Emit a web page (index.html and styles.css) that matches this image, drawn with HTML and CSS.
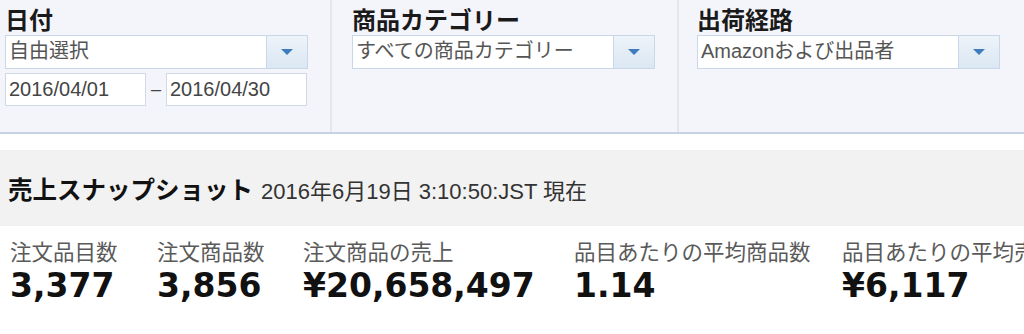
FILE: index.html
```html
<!DOCTYPE html>
<html lang="ja">
<head>
    <meta charset="UTF-8">
    <meta name="viewport" content="width=device-width, initial-scale=1.0">
    <title>売上ダッシュボード</title>
    <link rel="stylesheet" href="styles.css">
</head>
<body>
    <div class="filters">
        <div class="filter filter-first">
            <h3>日付</h3>
            <div class="select">
                <span class="select-text">自由選択</span>
                <span class="select-btn"><span class="arrow"></span></span>
            </div>
            <div class="date-range">
                <div class="date-input">2016/04/01</div>
                <span class="dash">–</span>
                <div class="date-input">2016/04/30</div>
            </div>
        </div>
        <div class="filter">
            <h3>商品カテゴリー</h3>
            <div class="select">
                <span class="select-text">すべての商品カテゴリー</span>
                <span class="select-btn"><span class="arrow"></span></span>
            </div>
        </div>
        <div class="filter filter-last">
            <h3>出荷経路</h3>
            <div class="select">
                <span class="select-text">Amazonおよび出品者</span>
                <span class="select-btn"><span class="arrow"></span></span>
            </div>
        </div>
    </div>

    <div class="snapshot-head">
        <h2>売上スナップショット</h2>
        <span class="snapshot-time">2016年6月19日 3:10:50:JST 現在</span>
    </div>

    <div class="metrics">
        <div class="metric">
            <div class="metric-label">注文品目数</div>
            <div class="metric-value">3,377</div>
        </div>
        <div class="metric">
            <div class="metric-label">注文商品数</div>
            <div class="metric-value">3,856</div>
        </div>
        <div class="metric">
            <div class="metric-label">注文商品の売上</div>
            <div class="metric-value">¥20,658,497</div>
        </div>
        <div class="metric">
            <div class="metric-label">品目あたりの平均商品数</div>
            <div class="metric-value">1.14</div>
        </div>
        <div class="metric">
            <div class="metric-label">品目あたりの平均売上</div>
            <div class="metric-value">¥6,117</div>
        </div>
    </div>
</body>
</html>
```

FILE: styles.css
```css
* {
    box-sizing: border-box;
    margin: 0;
    padding: 0;
}

body {
    background-color: #fff;
    font-family: "Liberation Sans", "Noto Sans CJK JP", sans-serif;
    color: #222;
    overflow: hidden;
}

.filters {
    display: flex;
    height: 134px;
    background-color: #f4f5fa;
    border-bottom: 2px solid #c5d2e2;
}

.filter {
    padding: 5px 22px 0 20px;
    border-left: 2px solid #e4e6ec;
}

.filter-first {
    padding-left: 5px;
    border-left: none;
}

.filter-last {
    flex: 1;
    padding-left: 18px;
}

h3 {
    font-family: "Noto Sans CJK JP", sans-serif;
    font-size: 24px;
    line-height: 27px;
    font-weight: bold;
    color: #1a1a1a;
    margin-bottom: 3px;
}

.select {
    display: flex;
    width: 303px;
    height: 34px;
    background-color: #fff;
    border: 1px solid #c9d8e8;
}

.select-text {
    flex: 1;
    padding-left: 3px;
    font-family: "Liberation Sans", "Noto Sans CJK JP", sans-serif;
    font-size: 20px;
    line-height: 31px;
    color: #555;
    white-space: nowrap;
    overflow: hidden;
}

.select-btn {
    display: flex;
    align-items: center;
    justify-content: center;
    width: 41px;
    border-left: 1px solid #c9d8e8;
    background: linear-gradient(#edf3f9, #dbe7f3);
}

.arrow {
    width: 0;
    height: 0;
    border-left: 6px solid transparent;
    border-right: 6px solid transparent;
    border-top: 6px solid #3f7cbc;
}

.date-range {
    display: flex;
    align-items: center;
    margin-top: 4px;
}

.date-input {
    width: 141px;
    height: 33px;
    padding-left: 3px;
    background-color: #fff;
    border: 1px solid #cfd9e5;
    font-size: 20px;
    line-height: 31px;
    color: #444;
}

.dash {
    width: 20px;
    text-align: center;
    font-size: 18px;
    color: #444;
}

.snapshot-head {
    display: flex;
    align-items: baseline;
    gap: 8px;
    margin-top: 16px;
    padding: 23px 8px 21px;
    background-color: #f2f2f2;
}

h2 {
    font-family: "Noto Sans CJK JP", sans-serif;
    font-size: 24.5px;
    line-height: 32px;
    font-weight: bold;
    color: #111;
}

.snapshot-time {
    font-size: 22px;
    color: #333;
}

.metrics {
    display: grid;
    grid-template-columns: 147px 146px 271px 268px auto;
    padding: 12px 0 0 10px;
    white-space: nowrap;
}

.metric-label {
    font-family: "Noto Sans CJK JP", sans-serif;
    font-size: 21.5px;
    line-height: 26px;
    color: #5a5a5a;
}

.metric-value {
    margin-top: 4px;
    font-family: "DejaVu Sans", "Noto Sans CJK JP", sans-serif;
    font-size: 33px;
    line-height: 36px;
    font-weight: bold;
    color: #111;
}
```
